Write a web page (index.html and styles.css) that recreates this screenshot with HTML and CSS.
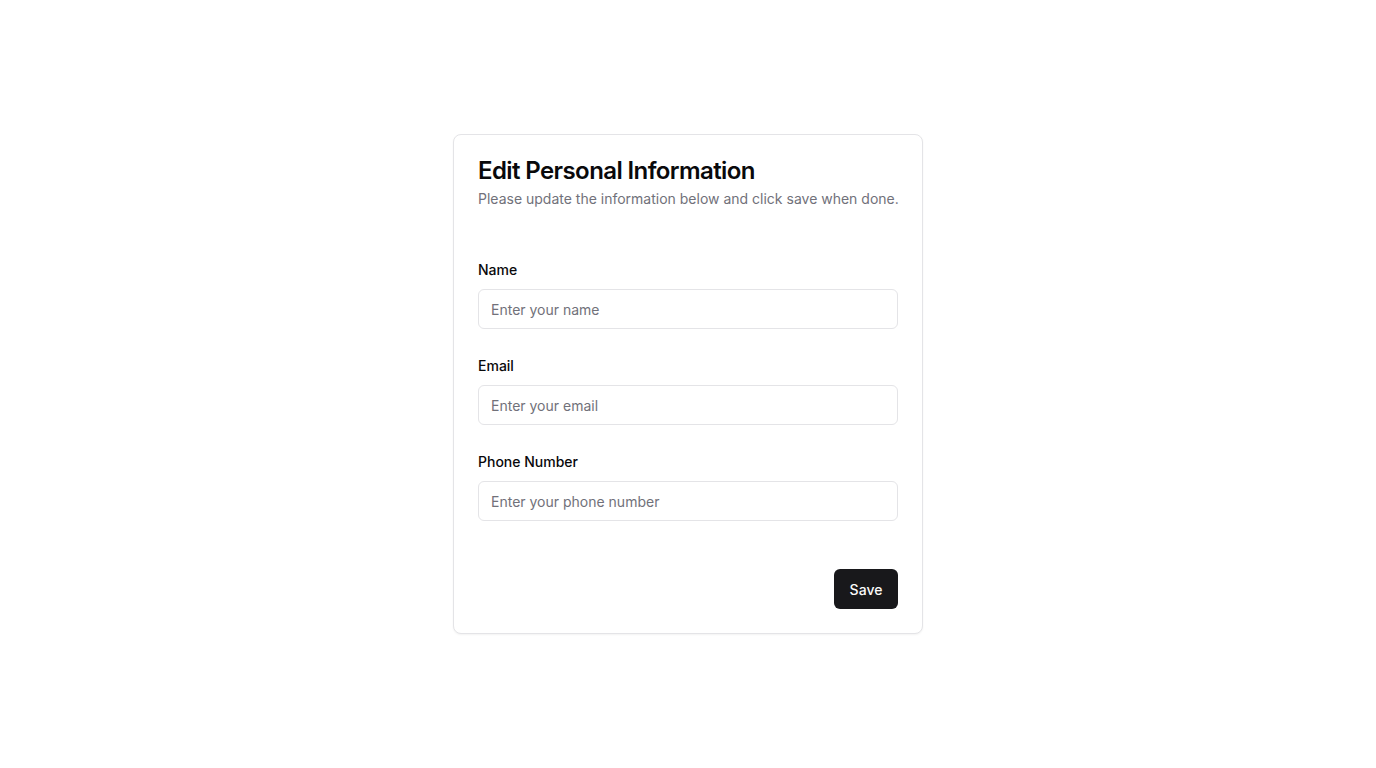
FILE: index.html
```html
<!DOCTYPE html>
<html lang="en">
<head>
<meta charset="utf-8">
<title>Edit Personal Information</title>
<link rel="stylesheet" href="styles.css">
</head>
<body>
<main class="page">
  <form class="card">
    <div class="card-header">
      <h1 class="card-title">Edit Personal Information</h1>
      <p class="card-desc">Please update the information below and click save when done.</p>
    </div>
    <div class="card-content">
      <div class="field">
        <label class="label" for="name">Name</label>
        <input class="input" id="name" type="text" placeholder="Enter your name">
      </div>
      <div class="field">
        <label class="label" for="email">Email</label>
        <input class="input" id="email" type="email" placeholder="Enter your email">
      </div>
      <div class="field">
        <label class="label" for="phone">Phone Number</label>
        <input class="input" id="phone" type="tel" placeholder="Enter your phone number">
      </div>
    </div>
    <div class="card-footer">
      <button class="btn" type="button">Save</button>
    </div>
  </form>
</main>
</body>
</html>
```

FILE: styles.css
```css
* { box-sizing: border-box; }
html, body { margin: 0; padding: 0; }
body {
  font-family: Inter, "Noto Sans", sans-serif;
  color: #09090b;
  background: #ffffff;
}
.page {
  min-height: 768px;
  display: flex;
  align-items: center;
  justify-content: center;
}
.card {
  width: 470px;
  border: 1px solid #e4e4e7;
  border-radius: 8px;
  background: #fff;
  box-shadow: 0 1px 2px rgba(0, 0, 0, 0.05);
  padding: 24px;
  display: flex;
  flex-direction: column;
}
.card-header {
  display: flex;
  flex-direction: column;
  gap: 6px;
}
.card-title {
  margin: 0;
  font-size: 24px;
  line-height: 24px;
  font-weight: 600;
  letter-spacing: -0.6px;
}
.card-desc {
  margin: 0;
  font-size: 14px;
  line-height: 20px;
  color: #71717a;
  white-space: nowrap;
}
.card-content {
  display: flex;
  flex-direction: column;
  gap: 26px;
  padding-top: 50px;
}
.field {
  display: flex;
  flex-direction: column;
  gap: 9px;
}
.label {
  font-size: 14px;
  line-height: 20px;
  padding-top: 1px;
  font-weight: 500;
}
.input {
  height: 40px;
  width: 100%;
  border: 1px solid #e4e4e7;
  border-radius: 6px;
  padding: 0 12px;
  font-family: inherit;
  font-size: 14px;
  color: #09090b;
  background: #fff;
  outline: none;
}
.input::placeholder { color: #71717a; }
.card-footer {
  display: flex;
  justify-content: flex-end;
  padding-top: 48px;
}
.btn {
  height: 40px;
  width: 64px;
  padding: 0;
  border: none;
  border-radius: 6px;
  background: #18181b;
  color: #fafafa;
  font-family: inherit;
  font-size: 14px;
  font-weight: 500;
  cursor: pointer;
}
```
